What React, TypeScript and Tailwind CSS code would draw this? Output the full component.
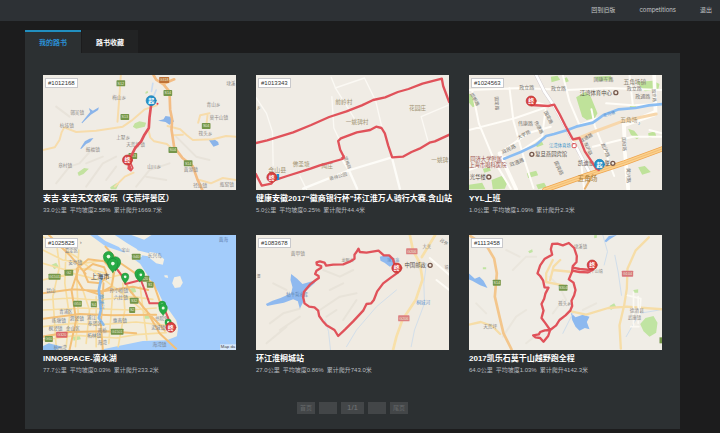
import type { ReactNode } from "react";

const ROUTE = "#e0525a";

type LabelItem = [number, number, string, number?, string?, number?];

function Labels({ items, size = 14, color = "#8d8a86" }: { items: LabelItem[]; size?: number; color?: string }) {
  return (
    <g textAnchor="middle">
      {items.map(([x, y, text, s, c, r], i) => (
        <text
          key={i}
          x={x}
          y={y}
          dy={(s ?? size) * 0.36}
          fontSize={s ?? size}
          fill={c || color}
          transform={r ? `rotate(${r} ${x} ${y})` : undefined}
        >
          {text}
        </text>
      ))}
    </g>
  );
}

function Shield({ x, y, text, fill = "#75964a", w = 26 }: { x: number; y: number; text: string; fill?: string; w?: number }) {
  return (
    <g>
      <rect x={x - w / 2} y={y - 9} width={w} height={18} rx={2} fill={fill} />
      <text x={x} y={y + 4} fontSize={11} fill="#e6edd8" textAnchor="middle">
        {text}
      </text>
    </g>
  );
}

function Stop({ x, y, kind }: { x: number; y: number; kind: "起" | "终" }) {
  const fill = kind === "起" ? "#2391c8" : "#d8413f";
  return (
    <g>
      <circle cx={x} cy={y} r={15} fill={fill} stroke={kind === "起" ? "#1c7fb2" : "#bd3230"} strokeWidth={2} />
      <text x={x} y={y + 7} fontSize={18} fontWeight={700} fill="#fff" textAnchor="middle">
        {kind}
      </text>
    </g>
  );
}

function GreenPin({ x, y, s = 1 }: { x: number; y: number; s?: number }) {
  return (
    <g transform={`translate(${x} ${y}) scale(${s})`}>
      <path d="M0 22C-5 16-14 9-14-2a14 14 0 0 1 28 0C14 9 5 16 0 22Z" fill="#27ab45" stroke="#168a34" strokeWidth={1.5} />
      <circle cy={-2} r={5} fill="#e9fbe6" />
    </g>
  );
}

function Poi({ x, y }: { x: number; y: number }) {
  return <circle cx={x} cy={y} r={6} fill="#f1eae0" stroke="#76584c" strokeWidth={4} />;
}

function MapFrame({ title, x = 18, land = "#f0ece5", children }: { title: string; x?: number; land?: string; children: ReactNode }) {
  return (
    <svg
      role="img"
      aria-label={title}
      viewBox={`${x} 15 580 345`}
      preserveAspectRatio="xMidYMid slice"
      className="block h-full w-full"
      fill="none"
      strokeLinejoin="round"
      strokeLinecap="round"
    >
      <rect x={x} y={15} width={582} height={345} fill={land} />
      {children}
    </svg>
  );
}

function AnjiMap() {
  return (
    <MapFrame title="安吉路线" x={20}>
      <g stroke="#e8e3da" strokeWidth={6}>
        <path d="M60 340l40-50 30-10 40-45M150 350l50-70 40-20M300 350l40-50 60-20M420 200l60 60 40 10M60 110l40 30M200 260l-50 20M210 330l30-40M330 320l60 10" />
      </g>
      <g fill="#c3e2a0">
        <path d="M296 160l14-6 20 4-4 12-26 6-10-6zM124 308l20-14 14 2-16 16-14 6zM222 352l18-12 8 2-8 16h-16z" />
        <path d="M328 66l6-4 2 6-8 4z" />
      </g>
      <g fill="#8ab4ea">
        <path d="M136 158l16-20 10-12-4-12 12 8 18-10-2 8-22 14-14 14-12 12zM132 236l14-22 14-8 12-2-10 12-12 6-14 14zM366 152l16-4 6-10 14 2 12 14-14 10-12-8zM518 210l14-4 14 10 2 8-16 6z" />
      </g>
      <path d="M350 40l-4 24M360 60l-8 20" stroke="#cbdcf0" strokeWidth={5} />
      <g stroke="#f7dcab" strokeWidth={6}>
        <path d="M20 240l36-8 14-22 6-22 8-16 36 14 60-4 80-12 26-18 40-34 36-12M254 15l-4 60-6 80M336 176l6 26 12 12 38 8 16 14M410 196l30-2M600 200l-30-2-40 10-60 2-18-14-20-18-38-10M486 158l6-22 28-6M600 330l-40-6-36 16-34-10M236 350l30-30 26-12M510 170l4-34" />
      </g>
      <g stroke="#f3bd85" strokeWidth={8}>
        <path d="M352 15l8 14 22 14 18 22 2 54 6 30-2 30 8 52 24 32 32 26 14 40 14 30M386 40l28-12" />
      </g>
      <Shield x={254} y={40} text="S12" />
      <Shield x={384} y={30} text="G318" fill="#bf7136" w={30} />
      <Shield x={395} y={69} text="S14" />
      <Shield x={266} y={141} text="S13" />
      <Shield x={510} y={168} text="S04" />
      <Shield x={410} y={240} text="S04" />
      <Shield x={456} y={280} text="S14" />
      <Shield x={290} y={258} text="S13" />
      <Labels
        items={[
          [249, 83, "梅山乡"], [123, 127, "鄣吴镇"], [92, 167, "杭垓镇"], [261, 201, "上墅乡"], [170, 238, "报福镇"],
          [87, 285, "章村镇"], [298, 224, "天荒坪镇"], [532, 104, "青山乡"], [548, 142, "莫干山镇"], [508, 190, "筏头乡"],
          [354, 289, "山川乡"], [464, 298, "黄湖镇"], [492, 346, "径山镇"], [572, 342, "瓶窑镇"], [584, 40, "埭溪"],
        ]}
      />
      <path d="M345 104l-5 38-2 32-13 20-10 20-18 20-8 16-8 16-4 14 6 18" stroke={ROUTE} strokeWidth={8} />
      <path d="M278 284l6-4 6 14-6 8-8-6z" stroke={ROUTE} strokeWidth={5} />
      <circle cx={364} cy={101} r={3} fill="#e34" />
      <Stop x={345} y={92} kind="起" />
      <Stop x={274} y={270} kind="终" />
    </MapFrame>
  );
}

function HanshanMap() {
  return (
    <MapFrame title="含山路线">
      <g stroke="#fbf9f4" strokeWidth={4}>
        <path d="M18 82l32 48 18 56 2 100M244 22l14 34 66 106M256 54l88-30M344 24l34 70 20 86M246 80l6 94 16 34M514 140l80-34M514 140l20 72M150 318l20 40" />
      </g>
      <g stroke="#fdfcf8" strokeWidth={7}>
        <path d="M276 266l22 36 24 54M160 356l140-56 126-38M426 262l24 94" />
      </g>
      <Labels
        size={17}
        color="#a29474"
        items={[
          [282, 96, "前岭村"], [503, 114, "花园庄"], [322, 157, "一姚碑村"], [154, 283, "佛圣塘"], [232, 289, "陶庄"],
          [570, 270, "一姚碑"], [82, 300, "含山县", 18], [265, 319, "褒禅公园", 14, "#8d8a86", -16], [293, 278, "望梅路", 13, "#8d8a86", 70], [27, 116, "乡", 12],
        ]}
      />
      <g stroke={ROUTE} strokeWidth={7}>
        <path d="M18 219l34-8 78-24 54-22 54-24 52-17 46-18 34-16 36-8 38-16 32-9 42-16 58-15 4 22 18 48" />
        <path d="M18 312l18 35 28-6 8-10 40-13 70-22 28-10 68-19 3-8-10-20-6-26 8-8 48-18 40-7 18-10 16 4 10 16 10 36 12 36 32-2 26-14 24-10 30-18 16-4 44-20" />
      </g>
      <path d="M272 264l12-8 2 10z" fill={ROUTE} />
      <path d="M80 312h8v18h-8z" fill="#218dd0" />
      <Stop x={66} y={322} kind="终" />
    </MapFrame>
  );
}

function YylMap() {
  return (
    <MapFrame title="上班路线" land="#f0ebe3">
      <g fill="#bfe29a">
        <path d="M340 82l26-16 16 10 22 54-8 14-24 6-14-10zM264 20l20-3 8 12-26 8zM18 70l14 12 10 24-12 6-12-14zM86 330l30-12 18 18-8 20-36 2zM192 310l28-8 6 14-30 8zM218 220l18-8 6 12-20 8zM496 176l18 6 16 20-8 6-18-14zM520 36l50-4 20 10-4 18-40 4zM526 292l20-4 18 18-26 8zM556 190l20-6 4 14-22 6zM220 344l24-6 8 14-26 6zM394 20l50-3 4 14-40 2zM18 344l40-6 10 20H18zM500 104l18-2 2 8-18 4zM60 296l20-4 4 10-20 6zM300 26l12-4 6 12-12 4z" />
      </g>
      <g stroke="#fffdf8" strokeWidth={6}>
        <path d="M18 60l160-6 134 6 126-6 160 6M28 60l20 100 50 120 46 76M140 54l12 100 34 120 26 80M18 180l140-36 116-40M110 250l84-60 70-20M248 120l-10 80-60 40M334 210l20 60 10 88M386 118l10 50 32 80 26 70M430 100l80 6 90-4M480 160l6 80 12 118M574 15l4 120-96 34M300 15l20 80 30 70M18 300l110-40M204 92l40 12 30 4M560 180l38 10M390 230l120-30 90 0M500 15l10 90M350 165l80-30" />
      </g>
      <path d="M574 15l4 110-94 40 2 80 10 113M110 250l50 108" stroke="#fffdf8" strokeWidth={11} />
      <path d="M220 15l26 52 30 44 54 100 40 78 14 26" stroke="#d5cfd3" strokeWidth={11} />
      <path d="M220 15l26 52 30 44 54 100 40 78 14 26" stroke="#fff" strokeWidth={8} />
      <path d="M334 210l58-24 86-32 102-22" stroke="#f7d7ac" strokeWidth={9} />
      <path d="M124 266l50-20 46-22 30-26 24-6 40-12 26-10 50-12 34-24 44-16 50-4 40-8 42-4" stroke="#8bbdf2" strokeWidth={8} />
      <path d="M246 360l130-46 110-36 114-42" stroke="#efa54e" strokeWidth={16} />
      <path d="M246 360l130-46 110-36 114-42" stroke="#fbd18e" strokeWidth={11} />
      <path d="M246 360l130-46 110-36 114-42" stroke="#efb468" strokeWidth={2} />
      <path d="M366 356l24-42" stroke="#e8b26e" strokeWidth={6} />
      <Labels
        size={15}
        color="#77746f"
        items={[
          [192, 53, "政立路"], [287, 54, "政立路"], [514, 55, "政立路"], [422, 27, "国康东路"], [516, 36, "五角场镇", 17, "#8c8677"],
          [540, 80, "政通路"], [188, 160, "伟康路"], [183, 194, "大学路", 14, "", -28], [138, 237, "政民路", 15, "", -26],
          [162, 277, "政通路", 15, "", -22], [257, 142, "国定路", 14, "", 62], [228, 172, "伟德路", 14, "", 62], [288, 294, "国宾路", 15, "", 64],
          [428, 240, "淞沪路", 15, "", 68], [484, 222, "国和路", 14, "", 86], [497, 316, "黄兴路", 15, "", 88], [102, 100, "国定路", 14, "", 86],
          [36, 88, "邯郸路", 14, "", 62], [574, 76, "国京路", 13, "", 84], [370, 204, "政通路", 14, "", -30], [376, 236, "淞沪路", 14, "", 66],
          [439, 132, "走马塘", 12, "#5a91cc", -16], [498, 149, "五角场", 17, "#a89778"], [374, 326, "五角场", 20, "#a57b39"],
          [399, 68, "江湾体育中心", 16, "#565249"], [265, 253, "复旦燕园宾馆", 16, "#554e49"], [291, 227, "江湾体育场", 13, "#338fc8"],
          [369, 280, "凯迪金", 16, "#554e49"], [434, 280, "厦", 16, "#554e49"], [45, 321, "光华楼", 16, "#554e49"],
          [70, 268, "同济大学附属", 16, "#9a5250"], [75, 286, "上海市眼科医院", 16, "#9a5250"], [529, 160, "♪", 16, "#58a1d8"],
        ]}
      />
      <Poi x={459} y={68} />
      <Poi x={207} y={253} />
      <Poi x={450} y={280} />
      <Poi x={78} y={321} />
      <rect x={328} y={221} width={12} height={12} rx={3} fill="#fff" stroke="#d74a4e" strokeWidth={3} />
      <path d="M206 105l50 3 18-4 16 28 18 36 22 40 20-4 4 10 12 30 16 24 18 28 8 4" stroke={ROUTE} strokeWidth={7} />
      <Stop x={205} y={93} kind="终" />
      <Stop x={410} y={283} kind="起" />
    </MapFrame>
  );
}

function ShanghaiMap() {
  return (
    <MapFrame title="滴水湖路线" x={20} land="#a3ccfb">
      <path d="M20 15h142l46 34 60 20 44 32 28 44 26 40 14 30 22 30 18 26 6 22-4 26-30 12-72 2-70 14-60 13H20z" fill="#f3eddd" />
      <path d="M184 15h52l36 24 30 18 16 22-16 12-24-12-30-28-40-18zM340 66l24 4 20 18-4 16-20-4-24-20zM286 15h60l-22 14zM300 60l40 10 6 10-30-4zM414 142l18-4 8 20-8 14-16 2-8-14zM384 136l10 0 2 8-10-2z" fill="#f3efe4" />
      <g fill="#c5e3a2">
        <path d="M46 104l14-6 8 12-14 8zM280 176l16-4 4 14-18 4zM110 320l20-4 4 12-22 4zM324 252l18 0-2 14-16 0z" />
      </g>
      <g stroke="#f7dda0" strokeWidth={5}>
        <path d="M20 60l60 30 60 10 70-10M20 100l70 20 60-4 60 14M20 210l80-6 80 6 110-10 60 8M20 240l120-6 140 6 80-6M20 290l90-10 80 4 110-8 90 10M20 330l100-14 120 8 60-10 90-6M60 30l10 80-20 90 10 150M90 40l-4 120 14 100-10 90M128 60l-6 90 4 100-8 100M230 120l-2 90-10 130M260 160l6 80-20 110M312 170l10 80 10 80M140 180l20 60-10 100M180 200v150M20 20l100 60 60 50 90 70 110 90M20 150l90-20 80 20 80-20" />
      </g>
      <g stroke="#f3c078" strokeWidth={6}>
        <path d="M122 116l34-28 48 6 30 34-8 42-40 22-46-14-18-30zM142 124l28-22 34 10 10 26-22 22-36-4zM20 190l90-12 90 6 90-14 46 10M38 15l66 64 44 52M246 120l34 60 50 62 56 60M20 266l110-14 100 4 130-2M100 360l20-90-14-90 20-60M200 360l-6-80 8-120M330 240l40 70 50 46M20 320l80-14 110-2 90 6M208 50l40 46 50 34 54 30 24 70" />
      </g>
      <path d="M196 140l-8 40 6 60-6 24 14 20" stroke="#8bbced" strokeWidth={8} />
      <path d="M20 348l18-8 40 10-20 10H20z" fill="#91bff0" />
      <Labels
        size={14}
        color="#77828e"
        items={[
          [192, 139, "上海市", 19, "#4d4a46"], [117, 98, "安亭镇"], [562, 28, "黄海", 14, "#6582ad"], [268, 62, "宝山", 12], [356, 76, "长兴岛"],
          [248, 182, "孙小桥镇"], [254, 202, "六灶镇"], [251, 272, "惠南镇"], [89, 243, "青浦区", 13], [68, 270, "练塘镇"], [122, 266, "泗泾镇"],
          [166, 262, "浦江"], [58, 294, "枫泾镇"], [110, 294, "金山区"], [176, 280, "奉贤区"], [377, 264, "书院镇"], [366, 291, "泥城镇"],
          [174, 317, "柘林镇"], [198, 336, "海湾"], [370, 342, "海湾镇"], [72, 352, "杭州湾", 13], [196, 216, "黄浦江", 16, "#619edb", 88], [106, 62, "嘉定区", 13], [44, 180, "昆山"],
          [198, 300, "南桥", 13], [134, 36, "›", 18, "#777"],
        ]}
      />
      <Shield x={300} y={80} text="G40" />
      <Shield x={98} y={128} text="G2" />
      <Shield x={55} y={140} text="G1501" w={36} />
      <Shield x={294} y={212} text="S32" />
      <Shield x={288} y={240} text="S2" w={18} />
      <Shield x={124} y={221} text="G50" />
      <Shield x={173} y={223} text="S4" w={18} />
      <Shield x={243} y={305} text="G1501" w={38} />
      <Shield x={77} y={314} text="G320" fill="#db646a" w={34} />
      <Shield x={38} y={327} text="G60" w={24} />
      <Shield x={326} y={146} text="S20" w={26} />
      <Shield x={342} y={164} text="S1" w={20} />
      <rect x={552} y={343} width={50} height={17} fill="#d9e9fb" />
      <text x={554} y={355} fontSize={13} fill="#444">
        Map da
      </text>
      <path d="M216 88l22 24 20 26 10 24 46-12 14 36 12 34h38l8 20 10 24 6 16" stroke={ROUTE} strokeWidth={6} />
      <GreenPin x={217} y={82} s={1.1} />
      <GreenPin x={238} y={98} s={1.1} />
      <GreenPin x={230} y={103} s={1.1} />
      <GreenPin x={267} y={142} s={0.8} />
      <GreenPin x={310} y={133} />
      <GreenPin x={314} y={136} s={0.8} />
      <GreenPin x={378} y={226} s={0.8} />
      <GreenPin x={381} y={236} s={0.9} />
      <GreenPin x={396} y={278} s={0.7} />
      <Stop x={404} y={292} kind="终" />
    </MapFrame>
  );
}

function TongchengMap() {
  return (
    <MapFrame title="桐城路线" land="#f0ebe2">
      <g stroke="#e8e3d9" strokeWidth={6}>
        <path d="M60 280l40-30 50-14M90 300l60-40M220 120l50 20 40-20M210 240l60-40 50-10M240 180l40-20M280 270l40-60M110 180l-40-20M230 260l30-20M50 340l60-50" />
      </g>
      <path d="M124 132l18 14 16 16 42-12-6 10-26 22-8 34-10 20-6-22-14-6-28 10-32 6-18 4-4-6 20-10 24-8 32-14 4-18-6-22zM390 80l20-6 22 10 6 16-18 10-16-12-12-6z" fill="#8fb9ef" />
      <path d="M226 270l10 34 6 56M530 100l-8 60 2 60-30 80-10 50M440 180l-60 50-60 70-30 50" stroke="#d3dfea" strokeWidth={3} />
      <g stroke="#f8e0a9" strokeWidth={8}>
        <path d="M480 15l10 48 20 36 8 50-20 60-40 60-18 50-10 40M556 15l-40 66" />
      </g>
      <path d="M540 84l58 50M560 150l38 30" stroke="#fdfbf5" strokeWidth={6} />
      <Labels
        items={[
          [144, 71, "黄甲镇"], [531, 50, "大关", 13], [582, 36, "吕亭", 13, "#777", 35], [142, 193, "牯牛背水库", 13, "#5d83ae"],
          [293, 91, "龙眠山", 12], [430, 91, "境主庙", 12, "#5b8ec5"], [520, 217, "桐城河", 14, "#6d9bd0"], [496, 106, "中国邮政", 16, "#59524b"], [26, 140, "潭", 12], [590, 114, "镇", 12],
        ]}
      />
      <Shield x={486} y={64} text="G206" fill="#dc8080" w={34} />
      <Shield x={462} y={265} text="G206" fill="#dc8080" w={34} />
      <Poi x={541} y={106} />
      <path
        d="M444 128L424 142 400 160 382 184 372 210 364 220 350 222 340 242 310 274 286 298 265 318 254 300 230 286 218 272 208 258 205 242 194 232 178 230 164 220 160 202 162 186 180 164 198 150 207 144 206 138 196 132 200 122 214 113 214 108 201 104 200 97 210 94 224 98 229 107 250 104 280 103 300 95 314 86 314 74 320 66 326 56 330 66 350 68 386 62 402 76 418 76 430 88 434 106"
        stroke={ROUTE}
        strokeWidth={7}
      />
      <Stop x={441} y={114} kind="终" />
    </MapFrame>
  );
}

function MoganMap() {
  return (
    <MapFrame title="莫干山路线" land="#f0ede6">
      <g stroke="#eae6dd" strokeWidth={6}>
        <path d="M120 320l40-60 30-20M150 120l40-40 30 0M260 140l30 30 20 40M360 240l40-20M40 220l30 30M190 340l50-40M270 250l30-40M130 60l40 20" />
      </g>
      <g fill="#c0e4a2">
        <path d="M532 282l16-18 24-6 12 20-4 30-20 12-18-16zM196 64l12-6 2 8-10 4zM440 228l14-8 6 10-16 10zM394 16l8-1 0 8-8 2zM512 180l14-2 0 10-14 0zM60 112l10 0 0 6-10 0z" />
      </g>
      <g fill="#8db9ef">
        <path d="M324 248l14 14 22-8 20 6-8 16 8 22-14-4-16 8-12-12-10-20zM18 130l18 16 14-6 12 12 12 22-22-8-24-14-10-4zM424 34l14-16 24-3-20 12-12 10z" />
      </g>
      <path d="M456 76l10 50 10 70M420 15l14 50-10 40M590 240l-60 10-40 70M330 250l-30 60" stroke="#d0deeb" strokeWidth={3} />
      <g stroke="#f6dda7" strokeWidth={7}>
        <path d="M558 22l-40 40-24 54-2 60-8 50-14 60 4 70M324 244l46 10 66-20 56-4 108 8M18 284l36-8 34 12 24 24M270 90l-20 40 0 26 50 10M262 150l10-40 20-20M270 120l60 6" />
      </g>
      <g stroke="#f3c68c" strokeWidth={8}>
        <path d="M74 52l20 34 8 44-6 70 14 60 12 50 24 48M18 15l56 37" />
      </g>
      <path d="M494 196l40 10-4 50M504 290h24M512 186v100M526 200v80" stroke="#fbf9f3" strokeWidth={5} />
      <Labels
        items={[
          [353, 48, "埭溪镇", 13], [82, 290, "天荒坪"], [306, 221, "筏头乡", 13], [522, 242, "德清县"], [515, 261, "武康镇", 13], [396, 125, "莫干山镇", 12],
        ]}
      />
      <Shield x={102} y={158} text="S14" w={24} />
      <Shield x={301} y={173} text="S304" w={26} />
      <Shield x={494} y={131} text="G104" fill="#d9777c" w={34} />
      <rect x={590} y={322} width={14} height={18} fill="#75964a" />
      <g stroke={ROUTE} strokeWidth={7}>
        <path d="M262 300L248 280 236 264 242 242 236 222 244 206 248 190 257 173 245 172 241 152 232 138 224 130 232 106 246 86 268 74 264 58 268 42 284 41 300 46 318 39 334 54 342 78 341 96 330 108 328 124 318 148 332 158 338 180 334 196 326 212 328 228 322 242 308 256 290 270 280 286 262 300 256 318 242 335 232 324 218 322 211 316 228 313 232 306 246 301 262 300" />
        <path d="M330 113L350 117 384 120 M328 122L350 126 376 127 390 119" />
      </g>
      <Stop x={388} y={105} kind="终" />
    </MapFrame>
  );
}

const routes = [
  { id: "#1012168", title: "安吉-安吉天文农家乐（天荒坪景区）", stats: ["33.0公里", "平均坡度2.58%", "累计爬升1669.7米"], Map: AnjiMap },
  { id: "#1013343", title: "健康安徽2017“徽商银行杯”环江淮万人骑行大赛.含山站", stats: ["5.0公里", "平均坡度0.25%", "累计爬升44.4米"], Map: HanshanMap },
  { id: "#1024563", title: "YYL上班", stats: ["1.0公里", "平均坡度1.09%", "累计爬升2.3米"], Map: YylMap },
  { id: "#1025825", title: "INNOSPACE-滴水湖", stats: ["77.7公里", "平均坡度0.03%", "累计爬升233.2米"], Map: ShanghaiMap },
  { id: "#1083678", title: "环江淮桐城站", stats: ["27.0公里", "平均坡度0.86%", "累计爬升743.0米"], Map: TongchengMap },
  { id: "#1113458", title: "2017凯乐石莫干山越野跑全程", stats: ["64.0公里", "平均坡度1.03%", "累计爬升4142.3米"], Map: MoganMap },
];

export default function App() {
  return (
    <div className="min-h-screen bg-[#1c1c1d] pb-1 font-['Liberation_Sans','Noto_Sans_CJK_SC',sans-serif] text-white">
      <header className="flex h-[21px] items-center justify-end bg-[#2d3135] pr-2">
        <nav className="flex items-center gap-6 pb-[2px] font-['Inter','Noto_Sans_CJK_SC',sans-serif] text-[6px] leading-3 text-[#c4c6c8]">
          <a href="#old">回到旧版</a>
          <a href="#competitions">competitions</a>
          <a href="#logout">退出</a>
        </nav>
      </header>

      <main className="mr-10 ml-[25px] pt-[9px]">
        <div role="tablist" className="flex h-[23px] text-[7px] leading-3 font-bold">
          <button role="tab" aria-selected="true" className="w-14 border-t-2 border-[#218fc0] bg-[#2c3032] text-[#2b8fd2]">
            我的路书
          </button>
          <button role="tab" aria-selected="false" className="ml-px w-14 border-t-2 border-[#222324] bg-[#222324] text-white">
            路书收藏
          </button>
        </div>

        <section className="bg-[#2c3032] px-[18px] pt-[22px] pb-[15px]">
          <div className="grid grid-cols-3 gap-x-5 gap-y-[19px]">
            {routes.map(({ id, title, stats, Map }) => (
              <article key={id} className="min-w-0">
                <div className="relative aspect-[193/115] overflow-hidden">
                  <Map />
                  <span className="absolute top-[3px] left-[2px] border border-[#c9c9cc] bg-white px-[2px] text-[6px] leading-[8px] text-[#333]">
                    {id}
                  </span>
                </div>
                <h2 className="mt-[3px] text-[8px] leading-[11px] font-bold whitespace-nowrap">{title}</h2>
                <p className="flex gap-[3px] text-[6px] leading-3 whitespace-nowrap text-[#bbbec0]">
                  {stats.map((s) => (
                    <span key={s}>{s}</span>
                  ))}
                </p>
              </article>
            ))}
          </div>

          <div className="mt-[26px] flex h-3 justify-center gap-1 text-[6px] leading-3 text-[#66696b]">
            <button className="w-[18px] bg-[#434648]">首页</button>
            <button aria-label="上一页" className="w-[18px] bg-[#434648]" />
            <span className="w-[23px] bg-[#434648] text-center text-[8px] text-[#727577]">1/1</span>
            <button aria-label="下一页" className="w-[18px] bg-[#434648]" />
            <button className="w-[18px] bg-[#434648]">尾页</button>
          </div>
        </section>
      </main>
    </div>
  );
}
